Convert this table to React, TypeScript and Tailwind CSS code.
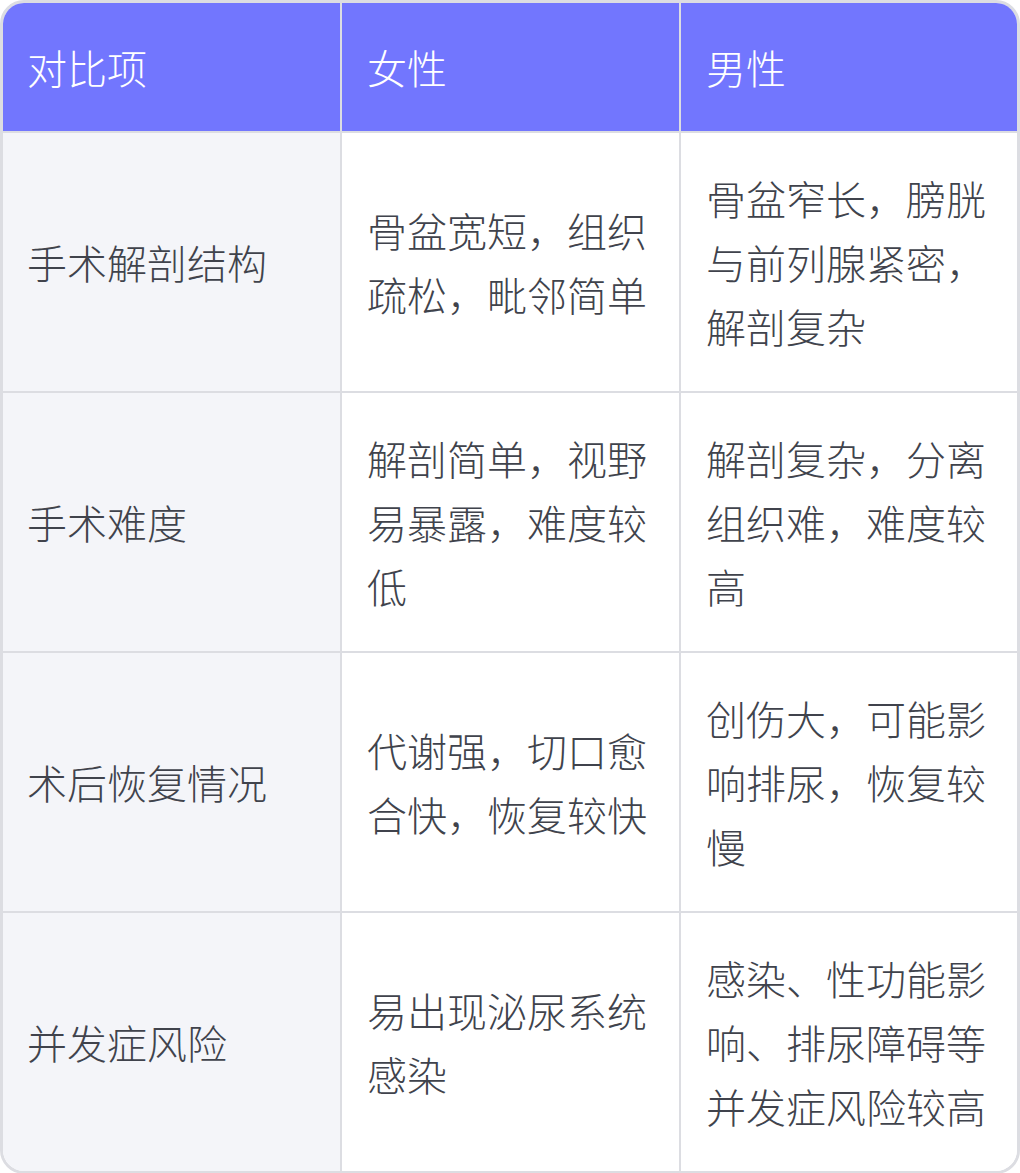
const rows = [
  {
    item: "手术解剖结构",
    female: "骨盆宽短，组织疏松，毗邻简单",
    male: "骨盆窄长，膀胱与前列腺紧密，解剖复杂",
  },
  {
    item: "手术难度",
    female: "解剖简单，视野易暴露，难度较低",
    male: "解剖复杂，分离组织难，难度较高",
  },
  {
    item: "术后恢复情况",
    female: "代谢强，切口愈合快，恢复较快",
    male: "创伤大，可能影响排尿，恢复较慢",
  },
  {
    item: "并发症风险",
    female: "易出现泌尿系统感染",
    male: "感染、性功能影响、排尿障碍等并发症风险较高",
  },
]

export default function App() {
  return (
    <div
      className="w-[1020px] bg-white font-light"
      style={{ fontFamily: '"Noto Sans CJK SC", "Noto Sans", sans-serif' }}
    >
      <div className="overflow-hidden rounded-[24px] border-[3px] border-[#dcdde2]">
        <table className="w-full table-fixed border-separate border-spacing-0 text-[40px] leading-[64px]">
          <thead>
            <tr className="bg-[#7276fe] text-white">
              <th className="w-[339px] border-b-2 border-r-2 border-[#dcdde2] px-6 py-8 text-left font-light">对比项</th>
              <th className="w-[339px] border-b-2 border-r-2 border-[#dcdde2] pl-[25px] pr-6 py-8 text-left font-light">女性</th>
              <th className="border-b-2 border-[#dcdde2] pl-[25px] pr-6 py-8 text-left font-light">男性</th>
            </tr>
          </thead>
          <tbody className="text-[#40434c]">
            {rows.map((r, i) => {
              const last = i === rows.length - 1
              return (
                <tr key={r.item}>
                  <td
                    className={`border-r-2 border-[#dcdde2] bg-[#f4f5f9] px-6 py-[33px] align-middle ${last ? "" : "border-b-2"}`}
                  >
                    {r.item}
                  </td>
                  <td
                    className={`border-r-2 border-[#dcdde2] bg-white pl-[25px] pr-6 py-[33px] align-middle ${last ? "" : "border-b-2"}`}
                  >
                    {r.female}
                  </td>
                  <td
                    className={`border-[#dcdde2] bg-white pl-[25px] pr-6 py-[33px] align-middle ${last ? "" : "border-b-2"}`}
                  >
                    {r.male}
                  </td>
                </tr>
              )
            })}
          </tbody>
        </table>
      </div>
    </div>
  )
}
